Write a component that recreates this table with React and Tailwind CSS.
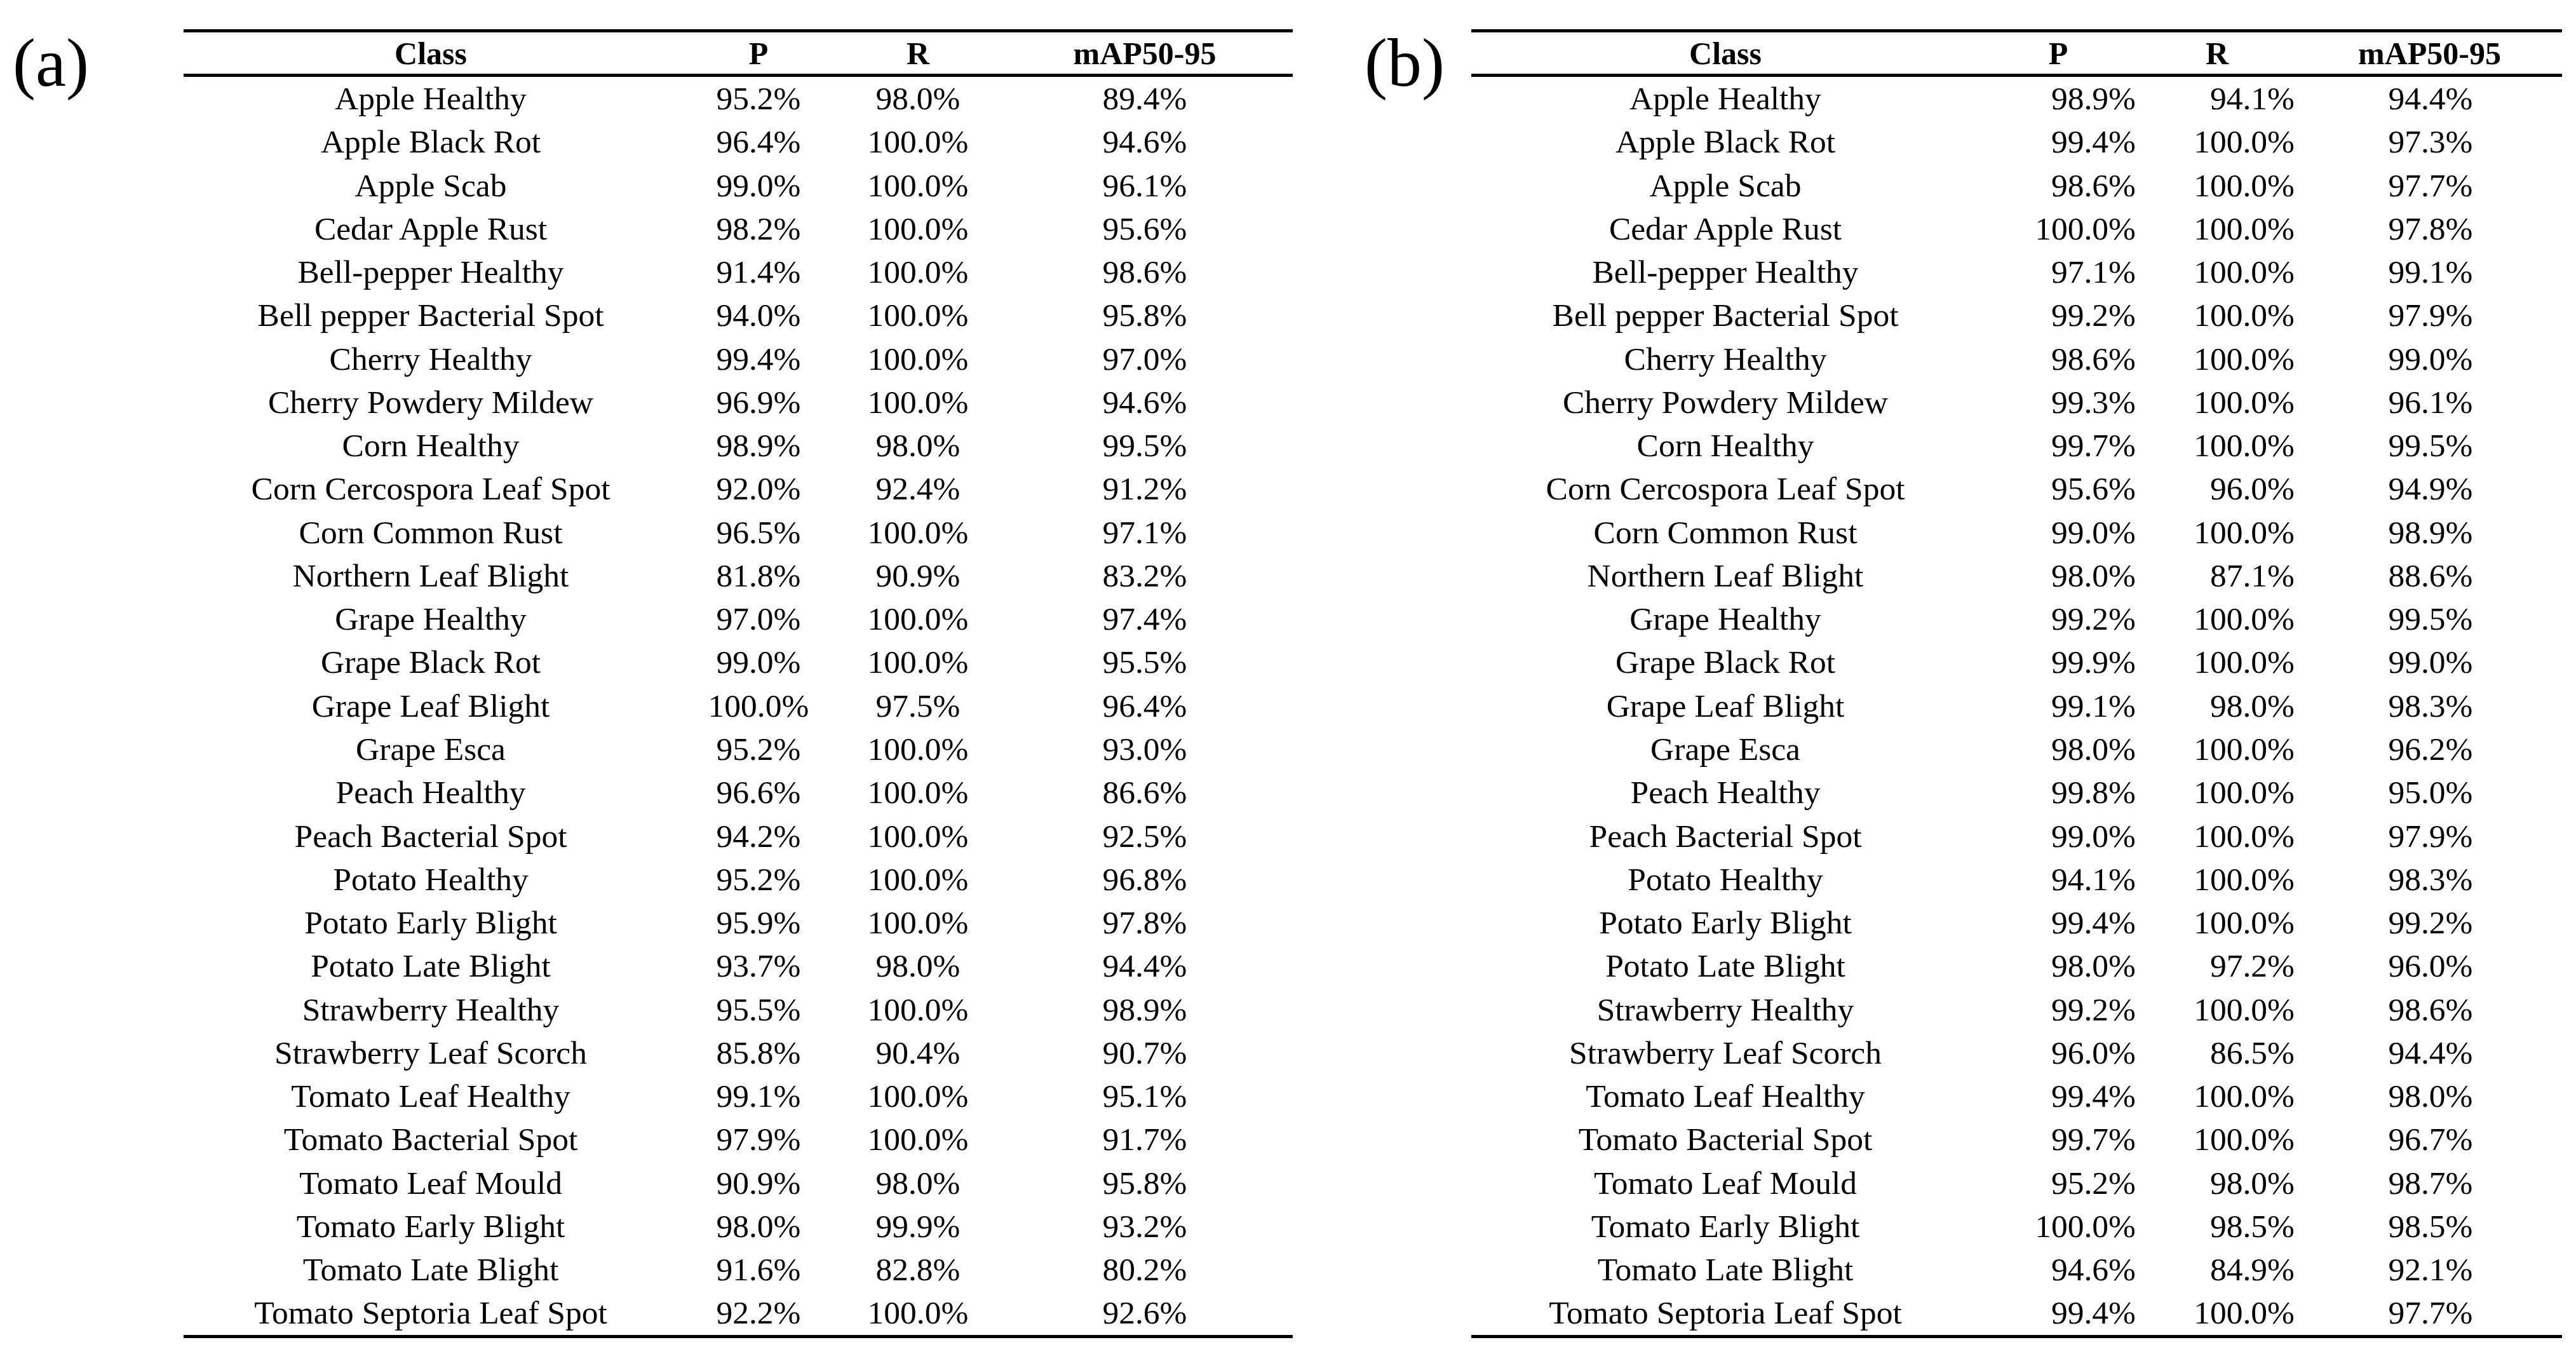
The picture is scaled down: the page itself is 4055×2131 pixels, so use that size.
import React from "react";

const A = [
  ["Apple Healthy", "95.2%", "98.0%", "89.4%"],
  ["Apple Black Rot", "96.4%", "100.0%", "94.6%"],
  ["Apple Scab", "99.0%", "100.0%", "96.1%"],
  ["Cedar Apple Rust", "98.2%", "100.0%", "95.6%"],
  ["Bell-pepper Healthy", "91.4%", "100.0%", "98.6%"],
  ["Bell pepper Bacterial Spot", "94.0%", "100.0%", "95.8%"],
  ["Cherry Healthy", "99.4%", "100.0%", "97.0%"],
  ["Cherry Powdery Mildew", "96.9%", "100.0%", "94.6%"],
  ["Corn Healthy", "98.9%", "98.0%", "99.5%"],
  ["Corn Cercospora Leaf Spot", "92.0%", "92.4%", "91.2%"],
  ["Corn Common Rust", "96.5%", "100.0%", "97.1%"],
  ["Northern Leaf Blight", "81.8%", "90.9%", "83.2%"],
  ["Grape Healthy", "97.0%", "100.0%", "97.4%"],
  ["Grape Black Rot", "99.0%", "100.0%", "95.5%"],
  ["Grape Leaf Blight", "100.0%", "97.5%", "96.4%"],
  ["Grape Esca", "95.2%", "100.0%", "93.0%"],
  ["Peach Healthy", "96.6%", "100.0%", "86.6%"],
  ["Peach Bacterial Spot", "94.2%", "100.0%", "92.5%"],
  ["Potato Healthy", "95.2%", "100.0%", "96.8%"],
  ["Potato Early Blight", "95.9%", "100.0%", "97.8%"],
  ["Potato Late Blight", "93.7%", "98.0%", "94.4%"],
  ["Strawberry Healthy", "95.5%", "100.0%", "98.9%"],
  ["Strawberry Leaf Scorch", "85.8%", "90.4%", "90.7%"],
  ["Tomato Leaf Healthy", "99.1%", "100.0%", "95.1%"],
  ["Tomato Bacterial Spot", "97.9%", "100.0%", "91.7%"],
  ["Tomato Leaf Mould", "90.9%", "98.0%", "95.8%"],
  ["Tomato Early Blight", "98.0%", "99.9%", "93.2%"],
  ["Tomato Late Blight", "91.6%", "82.8%", "80.2%"],
  ["Tomato Septoria Leaf Spot", "92.2%", "100.0%", "92.6%"],
];

const B = [
  ["Apple Healthy", "98.9%", "94.1%", "94.4%"],
  ["Apple Black Rot", "99.4%", "100.0%", "97.3%"],
  ["Apple Scab", "98.6%", "100.0%", "97.7%"],
  ["Cedar Apple Rust", "100.0%", "100.0%", "97.8%"],
  ["Bell-pepper Healthy", "97.1%", "100.0%", "99.1%"],
  ["Bell pepper Bacterial Spot", "99.2%", "100.0%", "97.9%"],
  ["Cherry Healthy", "98.6%", "100.0%", "99.0%"],
  ["Cherry Powdery Mildew", "99.3%", "100.0%", "96.1%"],
  ["Corn Healthy", "99.7%", "100.0%", "99.5%"],
  ["Corn Cercospora Leaf Spot", "95.6%", "96.0%", "94.9%"],
  ["Corn Common Rust", "99.0%", "100.0%", "98.9%"],
  ["Northern Leaf Blight", "98.0%", "87.1%", "88.6%"],
  ["Grape Healthy", "99.2%", "100.0%", "99.5%"],
  ["Grape Black Rot", "99.9%", "100.0%", "99.0%"],
  ["Grape Leaf Blight", "99.1%", "98.0%", "98.3%"],
  ["Grape Esca", "98.0%", "100.0%", "96.2%"],
  ["Peach Healthy", "99.8%", "100.0%", "95.0%"],
  ["Peach Bacterial Spot", "99.0%", "100.0%", "97.9%"],
  ["Potato Healthy", "94.1%", "100.0%", "98.3%"],
  ["Potato Early Blight", "99.4%", "100.0%", "99.2%"],
  ["Potato Late Blight", "98.0%", "97.2%", "96.0%"],
  ["Strawberry Healthy", "99.2%", "100.0%", "98.6%"],
  ["Strawberry Leaf Scorch", "96.0%", "86.5%", "94.4%"],
  ["Tomato Leaf Healthy", "99.4%", "100.0%", "98.0%"],
  ["Tomato Bacterial Spot", "99.7%", "100.0%", "96.7%"],
  ["Tomato Leaf Mould", "95.2%", "98.0%", "98.7%"],
  ["Tomato Early Blight", "100.0%", "98.5%", "98.5%"],
  ["Tomato Late Blight", "94.6%", "84.9%", "92.1%"],
  ["Tomato Septoria Leaf Spot", "99.4%", "100.0%", "97.7%"],
];

const cellBase = "whitespace-nowrap leading-[68.28px] h-[68.28px] text-[51.5px]";

function MetricTable({ rows, variant }) {
  const isA = variant === "a";
  const grid = isA
    ? "grid grid-cols-[778px_254px_248px_466px] w-[1746px]"
    : "grid grid-cols-[800px_248px_252px_417px] w-[1717px]";
  const pCell = isA ? "text-center" : "text-right pr-[2px]";
  const rCell = isA ? "text-center" : "text-right pr-[4px]";
  const mCell = isA ? "text-center" : "text-center pl-[3px]";
  return (
    <div className="mt-[46px] flex flex-col">
      <div className={`${grid} border-t-[5px] border-b-[5px] border-black font-bold text-[50px] leading-[63px] h-[75px] pt-[2px]`}>
        <div className="text-center">Class</div>
        <div className="text-center">P</div>
        <div className="text-center">R</div>
        <div className="text-center">mAP50-95</div>
      </div>
      <div className={`${grid} border-b-[5px] border-black`}>
        {rows.map((r, i) => (
          <React.Fragment key={i}>
            <div className={`${cellBase} text-center`}>{r[0]}</div>
            <div className={`${cellBase} ${pCell}`}>{r[1]}</div>
            <div className={`${cellBase} ${rCell}`}>{r[2]}</div>
            <div className={`${cellBase} ${mCell}`}>{r[3]}</div>
          </React.Fragment>
        ))}
      </div>
    </div>
  );
}

export default function App() {
  return (
    <div className="w-[4055px] h-[2131px] bg-white text-black font-['Liberation_Serif','Times_New_Roman',serif] flex overflow-hidden">
      <div className="w-[289px] shrink-0 pl-[20px] pt-[45px] text-[108px] leading-none">(a)</div>
      <MetricTable rows={A} variant="a" />
      <div className="w-[281px] shrink-0 pl-[113px] pt-[45px] text-[108px] leading-none">(b)</div>
      <MetricTable rows={B} variant="b" />
    </div>
  );
}
